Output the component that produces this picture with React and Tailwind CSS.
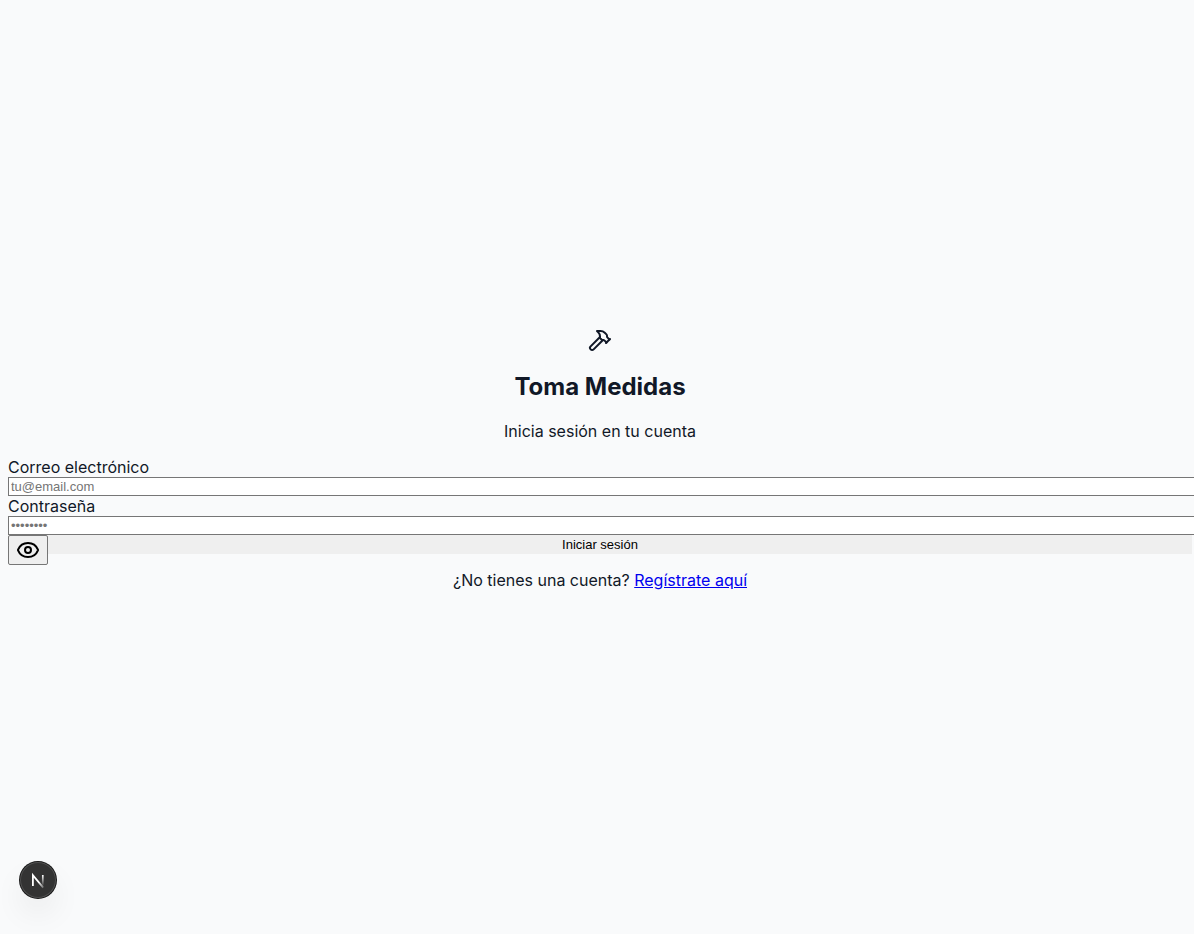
import React from "react";
import { Hammer, Eye } from "lucide-react";

const inputClass =
  "box-content block w-full h-[15px] border border-[#767676] bg-white px-[2px] py-px font-['Liberation_Sans',Arial,sans-serif] text-[13px] leading-[15px] text-black placeholder:text-[#757575]";

function DevToolsBadge() {
  return (
    <button
      type="button"
      aria-label="Open Next.js Dev Tools"
      className="fixed bottom-9 left-5 flex size-9 items-center justify-center rounded-full bg-[#333333] shadow-[0_0_0_1px_#171717,inset_0_0_0_1px_rgba(255,255,255,0.14),0_16px_32px_-4px_rgba(0,0,0,0.1)]"
    >
      <svg width="36" height="36" viewBox="0 0 36 36" fill="none" aria-hidden="true">
        <defs>
          <linearGradient id="diagonal" x1="19" y1="20" x2="24.5" y2="27" gradientUnits="userSpaceOnUse">
            <stop stopColor="white" />
            <stop offset="1" stopColor="white" stopOpacity="0.1" />
          </linearGradient>
          <linearGradient id="stem" x1="22.6" y1="13" x2="22.6" y2="24" gradientUnits="userSpaceOnUse">
            <stop stopColor="white" />
            <stop offset="1" stopColor="white" stopOpacity="0" />
          </linearGradient>
        </defs>
        <path d="M23.2 25.6L12.9 13.2V24" stroke="url(#diagonal)" strokeWidth="1.8" />
        <path d="M22.8 13V24" stroke="url(#stem)" strokeWidth="1.7" />
      </svg>
    </button>
  );
}

export default function App() {
  return (
    <div className="flex min-h-screen items-center overflow-x-hidden bg-[#f9fafb] pr-[2px] pl-2 font-[Inter,sans-serif] text-base leading-[19px] text-[#111827]">
      <main className="w-full">
        <header className="flex flex-col items-center text-center">
          <Hammer size={24} aria-hidden="true" />
          <h2 className="my-5 text-2xl leading-[30px] font-bold">Toma Medidas</h2>
          <p className="mb-4">Inicia sesión en tu cuenta</p>
        </header>
        <form onSubmit={(e) => e.preventDefault()}>
          <label htmlFor="email" className="block leading-5">
            Correo electrónico
          </label>
          <input id="email" type="email" placeholder="tu@email.com" className={inputClass} />
          <label htmlFor="password" className="block leading-5">
            Contraseña
          </label>
          <div className="relative">
            <input id="password" type="password" placeholder="••••••••" className={inputClass} />
            <button
              type="button"
              aria-label="Mostrar contraseña"
              className="absolute top-full left-0 rounded-[2px] border border-[#767676] bg-[#efefef] px-[7px] py-[2px] text-black"
            >
              <Eye size={24} aria-hidden="true" />
            </button>
          </div>
          <button
            type="submit"
            className="block w-full bg-[#efefef] py-[2px] text-center font-['Liberation_Sans',Arial,sans-serif] text-[13px] leading-[15px] text-black"
          >
            Iniciar sesión
          </button>
        </form>
        <p className="my-4 text-center leading-5">
          ¿No tienes una cuenta?{" "}
          <a href="#registro" className="text-[#0000ee] underline">
            Regístrate aquí
          </a>
        </p>
      </main>
      <DevToolsBadge />
    </div>
  );
}
